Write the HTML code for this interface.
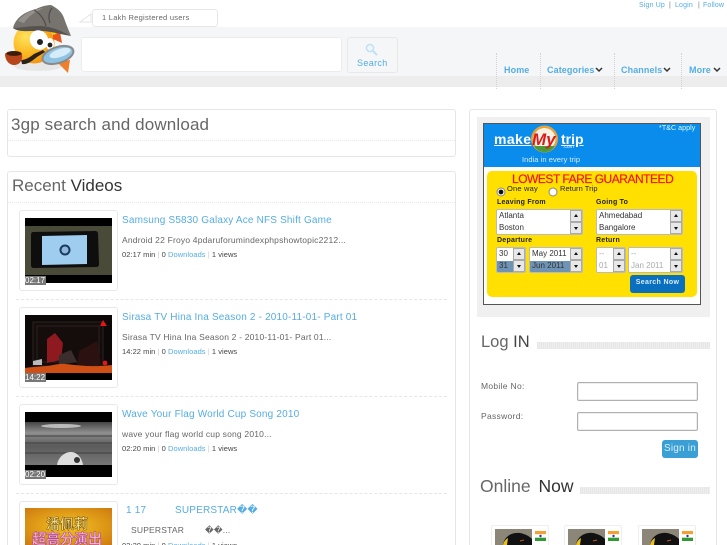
<!DOCTYPE html>
<html><head><meta charset="utf-8">
<style>
html,body{margin:0;padding:0;background:#fff;width:727px;height:545px;overflow:hidden}
#w{width:727px;height:545px;position:relative;overflow:hidden;font-family:"Liberation Sans","Noto Sans CJK SC",sans-serif;color:#555;background:#fff;filter:blur(.3px)}
.a{position:absolute;white-space:nowrap}
.box{position:absolute;box-sizing:border-box;background:#fff;border:1px solid #e6e6e6;border-radius:3px}
.sep{position:absolute;top:53px;height:36px;border-left:1px dotted #d2d2d2}
.nav{position:absolute;top:65px;font-size:9px;font-weight:bold;color:#55ade3;letter-spacing:.1px;white-space:nowrap}
.chev{position:absolute;top:67px}
.tl{position:absolute;top:2px;font-size:7px;color:#55ade3;letter-spacing:.15px;white-space:nowrap}
.dash{position:absolute;left:16px;width:431px;border-top:1px dashed #e6e6e6}
.card{position:absolute;left:19px;width:99px;height:81px;box-sizing:border-box;background:#fff;border:1px solid #e8e8e8;border-radius:3px}
.th{position:absolute;left:25px;width:87px;height:65px;overflow:hidden;background:#000}
.tm{position:absolute;left:25px;width:21px;height:9px;background:#777;color:#fff;font-size:8px;line-height:9px;overflow:hidden;white-space:nowrap}
.t{position:absolute;left:122px;font-size:10px;color:#55ade3;letter-spacing:.18px;white-space:nowrap}
.d{position:absolute;left:122px;font-size:8.5px;color:#666;letter-spacing:.19px;white-space:nowrap}
.m{position:absolute;left:122px;font-size:7.5px;color:#444;letter-spacing:.05px;white-space:nowrap}
.m b{font-weight:normal;color:#55ade3}.m i{font-style:normal;color:#ccc}
.lb{position:absolute;font-size:7.5px;color:#222;letter-spacing:.2px;white-space:nowrap}
.lbb{position:absolute;font-size:7px;font-weight:bold;color:#222;letter-spacing:.25px;white-space:nowrap}
.sel{position:absolute;box-sizing:border-box;background:#fff;border:1px solid #bbb;border-radius:2px;overflow:hidden;font-size:8px;color:#333}
.sel span{position:absolute;left:2px;white-space:nowrap}
.sb{position:absolute;right:0;width:12px;height:12px;background:#e8e8e8;border:1px solid #aaa;box-sizing:border-box}
.sb:after{content:"";position:absolute;left:2.5px;border-left:2.5px solid transparent;border-right:2.5px solid transparent}
.up:after{top:3px;border-bottom:3px solid #111}
.dn:after{top:4px;border-top:3px solid #111}
.hatch{position:absolute;height:7px;background:repeating-linear-gradient(90deg,#e6e6e6 0 1px,#eeeeee 1px 2px)}
.u{position:absolute;top:525px;width:58px;height:20px;box-sizing:border-box;background:#fff;border:1px solid #eee;border-bottom:0;border-radius:2px 2px 0 0}
.inp{position:absolute;left:577px;width:121px;height:19px;box-sizing:border-box;border:1px solid #b0b0b0;border-radius:2px;background:#fff;box-shadow:inset 0 0 0 .5px #ddd}
</style></head><body><div id="w">

<!-- header bands -->
<div class="a" style="left:0;top:27px;width:727px;height:49px;background:#f5f6f8"></div>
<div class="a" style="left:0;top:76px;width:727px;height:11px;background:#ededed"></div>

<!-- mascot -->
<svg class="a" style="left:3px;top:3px" width="76" height="73" viewBox="3 3 76 73">
<defs><radialGradient id="fc" cx=".3" cy=".35" r=".8"><stop offset="0" stop-color="#ffe35c"/><stop offset=".55" stop-color="#fbb51f"/><stop offset="1" stop-color="#ee8a12"/></radialGradient></defs>
<ellipse cx="38" cy="66" rx="24" ry="5" fill="#ddd" opacity=".6"/>
<circle cx="34" cy="43" r="20.500" fill="url(#fc)"/>
<path d="M53 30l7 2 2 11-9-4z" fill="#e8551a"/>
<path d="M50 31l6-3 3 4-5 3z" fill="#ffc800"/>
<path d="M13 28C16 16 28 11 36 9c6-3 12-4 15-4 6 3 11 7 13 13 2 6 5 13 7 18-10-5-22-11-36-10-8 1-16 3-22 2z" fill="#77736f"/>
<path d="M18 21C24 13 34 9 44 8c-10 4-16 9-20 15z" fill="#94908c"/>
<path d="M34 10c5 3 10 8 12 16M52 8c-3 4-4 9-2 15" stroke="#4f4c49" stroke-width="1.200" fill="none"/>
<path d="M13 28c7 0 15-2 23-2 13-1 26 5 35 10-12-2-24-6-36-5-8 0-17 1-22-3z" fill="#55524f"/>
<ellipse cx="39" cy="40" rx="9" ry="10" fill="#fff" transform="rotate(-30 39 40)"/>
<ellipse cx="50" cy="44" rx="4" ry="6" fill="#fff"/>
<circle cx="40" cy="42" r="3" fill="#222"/>
<circle cx="50" cy="45" r="2.400" fill="#222"/>
<path d="M21 60c5 0 9-3 13-6l9-4 2 2-8 5c-5 4-10 8-15 7z" fill="#2d2218"/>
<path d="M5 54c3-4 15-4 17 0 1 6-2 11-8 11-5 0-9-5-9-11z" fill="#b8451a"/>
<ellipse cx="14" cy="53.500" rx="7.500" ry="2.400" fill="#3b1d0c"/>
<path d="M57 62l13-2-2 13z" fill="#ef7f2a"/>
<ellipse cx="58" cy="55" rx="16" ry="8" transform="rotate(-18 58 55)" fill="#8fc3e4" stroke="#8a8a8a" stroke-width="2"/>
<ellipse cx="60" cy="53" rx="11" ry="4" transform="rotate(-18 60 53)" fill="#d6ecf8"/>
</svg>

<!-- speech -->
<svg class="a" style="left:79px;top:12px" width="15" height="12"><path d="M1 10l11-8v8z" fill="#fff" stroke="#e4e4e4"/></svg>
<div class="box" style="left:92px;top:9px;width:126px;height:18px"></div>
<div class="a" style="left:102px;top:13px;font-size:7.5px;color:#666;letter-spacing:.27px">1 Lakh Registered users</div>

<!-- top links -->
<div class="tl" style="left:639px">Sign Up</div><div class="tl" style="left:669px;color:#777">|</div><div class="tl" style="left:675px">Login</div><div class="tl" style="left:698px;color:#777">|</div><div class="tl" style="left:703px">Follow</div>

<!-- search -->
<div class="box" style="left:81px;top:37px;width:261px;height:35px;border-color:#ececec"></div>
<div class="box" style="left:347px;top:37px;width:51px;height:36px;background:#f5f6f8;border-color:#e8e8e8"></div>
<svg class="a" style="left:365px;top:43px" width="13" height="13"><circle cx="5" cy="5" r="3.600" fill="#eef6fb" stroke="#c0dff2" stroke-width="1.400"/><path d="M8 8l4 4" stroke="#c0dff2" stroke-width="2"/></svg>
<div class="a" style="left:357px;top:58px;font-size:9px;color:#55ade3;letter-spacing:.35px">Search</div>

<!-- nav -->
<div class="sep" style="left:496px"></div><div class="sep" style="left:540px"></div><div class="sep" style="left:614px"></div><div class="sep" style="left:681px"></div>
<div class="nav" style="left:504px">Home</div>
<div class="nav" style="left:547px">Categories</div>
<div class="nav" style="left:621px">Channels</div>
<div class="nav" style="left:689px">More</div>
<svg class="chev" style="left:595px" width="8" height="6"><path d="M1 1l3 3 3-3" stroke="#333" stroke-width="1.500" fill="none"/></svg>
<svg class="chev" style="left:663px" width="8" height="6"><path d="M1 1l3 3 3-3" stroke="#333" stroke-width="1.500" fill="none"/></svg>
<svg class="chev" style="left:713px" width="8" height="6"><path d="M1 1l3 3 3-3" stroke="#333" stroke-width="1.500" fill="none"/></svg>

<!-- panel 1 -->
<div class="box" style="left:7px;top:109px;width:449px;height:48px"></div>
<div class="a" style="left:11px;top:115px;font-size:17px;letter-spacing:.15px;color:#666">3gp search and download</div>
<div class="a" style="left:8px;top:140px;width:447px;border-top:1px dotted #e8e8e8"></div>

<!-- panel 2 -->
<div class="box" style="left:7px;top:171px;width:449px;height:374px;border-bottom:0;border-radius:3px 3px 0 0"></div>
<div class="a" style="left:12px;top:176px;font-size:17px;color:#666">Recent <span style="color:#333">Videos</span></div>
<div class="a" style="left:8px;top:202px;width:447px;border-top:1px dotted #e8e8e8"></div>

<!-- item 1 -->
<div class="card" style="top:210px"></div>
<div class="th" style="top:218px"><svg width="87" height="65"><rect width="87" height="65" fill="#000"/><rect y="8" width="87" height="49" fill="#4a4a38"/><path d="M8 14l62-1c2 0 3 1 3 3l1 30c0 2-1 3-3 3l-62 1c-2 0-3-1-3-3V17c0-2 1-3 2-3z" fill="#0e0e0e"/><path d="M17 18l45-1 0 29-45 1z" fill="#9ecdf0"/><circle cx="40" cy="32" r="5.500" fill="#1a3a60"/><circle cx="40" cy="32" r="3.500" fill="#8fb8dc"/></svg></div>
<div class="tm" style="top:276px">02:17</div>
<div class="t" style="top:215px">Samsung S5830 Galaxy Ace NFS Shift Game</div>
<div class="d" style="top:235px">Android 22 Froyo 4pdaruforumindexphpshowtopic2212...</div>
<div class="m" style="top:250px">02:17 min <i>|</i> 0 <b>Downloads</b> <i>|</i> 1 views</div>
<div class="dash" style="top:299px"></div>

<!-- item 2 -->
<div class="card" style="top:307px"></div>
<div class="th" style="top:315px"><svg width="87" height="65"><rect width="87" height="65" fill="#0c0808"/><rect x="8" y="7" width="70" height="44" fill="#150c0c" stroke="#2a2222"/><rect x="12" y="11" width="62" height="36" fill="none" stroke="#2a2222"/><path d="M22 24l8-6 8 10-2 17-14 3z" fill="#8e1a20"/><path d="M34 40l12-5 6 12-18 3z" fill="#3a2e2c"/><path d="M54 36l18-10 4 24-24 2z" fill="#2b1210"/><path d="M0 53c14-2 18-1 28-3s12-1 22 0 20 2 37 0v8H0z" fill="#cf4f14"/><path d="M8 46l9-2v6H8z" fill="#bbb"/><path d="M78 5l4 6h-7z" fill="#e01818"/><circle cx="80" cy="48" r="2.400" fill="#e01818"/><rect y="58" width="87" height="7" fill="#000"/></svg></div>
<div class="tm" style="top:373px">14:22</div>
<div class="t" style="top:312px">Sirasa TV Hina Ina Season 2 - 2010-11-01- Part 01</div>
<div class="d" style="top:332px">Sirasa TV Hina Ina Season 2 - 2010-11-01- Part 01...</div>
<div class="m" style="top:347px">14:22 min <i>|</i> 0 <b>Downloads</b> <i>|</i> 1 views</div>
<div class="dash" style="top:396px"></div>

<!-- item 3 -->
<div class="card" style="top:404px"></div>
<div class="th" style="top:412px"><svg width="87" height="65"><defs><linearGradient id="g" x1="0" y1="0" x2="0" y2="1"><stop offset="0" stop-color="#444"/><stop offset=".25" stop-color="#8f8f8f"/><stop offset=".55" stop-color="#5c5c5c"/><stop offset="1" stop-color="#777"/></linearGradient></defs><rect width="87" height="65" fill="#000"/><rect y="10" width="87" height="43" fill="url(#g)"/><ellipse cx="36" cy="14" rx="20" ry="2" fill="#bbb"/><path d="M0 24h87M0 31h87M0 41h87" stroke="#3e3e3e"/><path d="M32 53c1-8 8-13 14-13s11 6 12 13z" fill="#ddd"/><circle cx="52" cy="48" r="3" fill="#333"/></svg></div>
<div class="tm" style="top:470px">02:20</div>
<div class="t" style="top:409px">Wave Your Flag World Cup Song 2010</div>
<div class="d" style="top:429px">wave your flag world cup song 2010...</div>
<div class="m" style="top:444px">02:20 min <i>|</i> 0 <b>Downloads</b> <i>|</i> 1 views</div>
<div class="dash" style="top:493px"></div>

<!-- item 4 -->
<div class="card" style="top:501px;height:44px;border-bottom:0;border-radius:3px 3px 0 0"></div>
<div class="th" style="top:508px;height:37px"><svg width="87" height="37"><defs><radialGradient id="y" cx=".5" cy=".5" r=".7"><stop offset="0" stop-color="#f2c420"/><stop offset="1" stop-color="#cf7a10"/></radialGradient></defs><rect width="87" height="37" fill="url(#y)"/><text x="21" y="21" font-size="14" font-weight="bold" fill="#efe88a" stroke="#7a4a10" stroke-width=".5" font-family="Noto Sans CJK SC,sans-serif">潘佩莉</text><text x="7" y="36" font-size="14" font-weight="bold" fill="#f6b8dc" stroke="#a83a90" stroke-width=".5" font-family="Noto Sans CJK SC,sans-serif">超高分演出</text></svg></div>
<div class="t" style="top:505px;left:126px">1 17</div>
<div class="t" style="top:505px;left:175px">SUPERSTAR��</div>
<div class="d" style="top:525px;left:131px">SUPERSTAR</div>
<div class="d" style="top:525px;left:205px">��...</div>
<div class="m" style="top:541px;height:4px;overflow:hidden;line-height:9px">02:20 min <i>|</i> 0 <b>Downloads</b> <i>|</i> 1 views</div>

<!-- right panel -->
<div class="box" style="left:469px;top:109px;width:248px;height:436px;border-bottom:0;border-radius:3px 3px 0 0"></div>
<div class="a" style="left:477px;top:117px;width:233px;height:200px;background:#f0f0f0"></div>

<!-- ad -->
<div class="a" style="left:483px;top:123px;width:218px;height:182px;box-sizing:border-box;border:1px solid #555;background:#fff"></div>
<div class="a" style="left:484px;top:124px;width:216px;height:43px;background:#0a8ced"></div>
<div class="a" style="left:659px;top:125px;font-size:7px;color:#dff;letter-spacing:.1px">*T&amp;C apply</div>
<div class="a" style="left:494px;top:131px;font-size:14px;font-weight:bold;color:#fff;text-decoration:underline;letter-spacing:.4px">make</div>
<div class="a" style="left:561px;top:131px;font-size:14px;font-weight:bold;color:#fff;text-decoration:underline">trip</div>
<svg class="a" style="left:530px;top:125px" width="30" height="32"><circle cx="14.500" cy="14" r="13.500" fill="#e8a23a"/><circle cx="14.500" cy="14" r="11" fill="#f6f2e6"/><path d="M4 21a12 12 0 0 0 21 0z" fill="#4d9a3a"/><text x="2" y="20" font-size="17" font-weight="bold" font-style="italic" fill="#d91c1c" font-family="Liberation Sans,sans-serif">My</text></svg>
<div class="a" style="left:563px;top:144px;font-size:5px;color:#fff">.com</div>
<div class="a" style="left:522px;top:155px;font-size:7.500px;color:#d5eeff;letter-spacing:.05px">India in every trip</div>

<div class="a" style="left:487px;top:171px;width:210px;height:126px;background:#ffe000;border-radius:5px"></div>
<div class="a" style="left:512px;top:172px;font-size:12px;color:#f01414;-webkit-text-stroke:.2px #f01414;letter-spacing:-.48px">LOWEST FARE GUARANTEED</div>
<svg class="a" style="left:495px;top:186px" width="70" height="12"><circle cx="6" cy="6" r="4" fill="#fff" stroke="#888"/><circle cx="6" cy="6" r="2.400" fill="#111"/><circle cx="58" cy="6" r="4" fill="#fff" stroke="#888"/></svg>
<div class="lb" style="left:507px;top:184px">One way</div>
<div class="lb" style="left:560px;top:184px;letter-spacing:.05px">Return Trip</div>
<div class="lbb" style="left:497px;top:199px">Leaving From</div>
<div class="lbb" style="left:596px;top:199px">Going To</div>

<div class="sel" style="left:496px;top:209px;width:87px;height:26px"><span style="top:1px">Atlanta</span><span style="top:13px">Boston</span><div class="sb up" style="top:0"></div><div class="sb dn" style="top:12px"></div></div>
<div class="sel" style="left:596px;top:209px;width:87px;height:26px"><span style="top:1px">Ahmedabad</span><span style="top:13px">Bangalore</span><div class="sb up" style="top:0"></div><div class="sb dn" style="top:12px"></div></div>

<div class="lbb" style="left:497px;top:237px">Departure</div>
<div class="lbb" style="left:596px;top:237px">Return</div>

<div class="sel" style="left:496px;top:247px;width:30px;height:26px"><div style="position:absolute;left:0;top:13px;width:100%;height:13px;background:#6f93b5"></div><span style="top:1px">30</span><span style="top:13px">31</span><div class="sb up" style="top:0"></div><div class="sb dn" style="top:12px"></div></div>
<div class="sel" style="left:529px;top:247px;width:54px;height:26px"><div style="position:absolute;left:0;top:13px;width:100%;height:13px;background:#6f93b5"></div><span style="top:1px">May 2011</span><span style="top:13px">Jun 2011</span><div class="sb up" style="top:0"></div><div class="sb dn" style="top:12px"></div></div>
<div class="sel" style="left:596px;top:247px;width:30px;height:26px;color:#aaa"><span style="top:1px">--</span><span style="top:13px">01</span><div class="sb up" style="top:0"></div><div class="sb dn" style="top:12px"></div></div>
<div class="sel" style="left:628px;top:247px;width:55px;height:26px;color:#aaa"><span style="top:1px">--</span><span style="top:13px">Jan 2011</span><div class="sb up" style="top:0"></div><div class="sb dn" style="top:12px"></div></div>

<div class="a" style="left:630px;top:275px;width:55px;height:18px;background:#0b6fc0;border-radius:3px;color:#d8ecfa;font-size:7px;font-weight:bold;text-align:center;line-height:16px;letter-spacing:.35px">Search Now</div>

<!-- login -->
<div class="a" style="left:481px;top:333px;font-size:16.500px;color:#666">Log <span style="color:#444">IN</span></div>
<div class="hatch" style="left:537px;top:342px;width:173px"></div>
<div class="a" style="left:481px;top:381px;font-size:8.500px;color:#666;letter-spacing:.3px">Mobile No:</div>
<div class="a" style="left:481px;top:411px;font-size:8.500px;color:#666;letter-spacing:.3px">Password:</div>
<div class="inp" style="top:382px"></div>
<div class="inp" style="top:412px"></div>
<div class="a" style="left:662px;top:440px;width:36px;height:18px;background:#3a9fd5;border-radius:3px;color:#d8effa;font-size:10px;text-align:center;line-height:17px;letter-spacing:.2px">Sign in</div>

<!-- online -->
<div class="a" style="left:480px;top:476px;font-size:17.500px;color:#666">Online <span style="color:#333;margin-left:3px">Now</span></div>
<div class="hatch" style="left:580px;top:487px;width:130px"></div>

<div class="u" style="left:491px"></div>
<div class="u" style="left:564px"></div>
<div class="u" style="left:638px"></div>
<svg class="a" style="left:495px;top:529px" width="37" height="16"><rect width="37" height="16" fill="#8b8678"/><path d="M8 16C9 8 16 3 25 4c5 1 9 3 12 6v6z" fill="#111"/><path d="M8 16c1-4 3-6 5-7l-1 7z" fill="#e8c020"/><path d="M25 12l4-1" stroke="#c05a1a"/></svg>
<svg class="a" style="left:568px;top:529px" width="37" height="16"><rect width="37" height="16" fill="#8b8678"/><path d="M8 16C9 8 16 3 25 4c5 1 9 3 12 6v6z" fill="#111"/><path d="M8 16c1-4 3-6 5-7l-1 7z" fill="#e8c020"/><path d="M25 12l4-1" stroke="#c05a1a"/></svg>
<svg class="a" style="left:642px;top:529px" width="37" height="16"><rect width="37" height="16" fill="#8b8678"/><path d="M8 16C9 8 16 3 25 4c5 1 9 3 12 6v6z" fill="#111"/><path d="M8 16c1-4 3-6 5-7l-1 7z" fill="#e8c020"/><path d="M25 12l4-1" stroke="#c05a1a"/></svg>
<svg class="a" style="left:535px;top:531px" width="11" height="10"><rect width="11" height="3.300" fill="#f5a030"/><rect y="3.300" width="11" height="3.400" fill="#fff"/><rect y="6.700" width="11" height="3.300" fill="#2f9a2f"/><circle cx="5.500" cy="5" r="1.200" fill="#33a"/></svg>
<svg class="a" style="left:608px;top:531px" width="11" height="10"><rect width="11" height="3.300" fill="#f5a030"/><rect y="3.300" width="11" height="3.400" fill="#fff"/><rect y="6.700" width="11" height="3.300" fill="#2f9a2f"/><circle cx="5.500" cy="5" r="1.200" fill="#33a"/></svg>
<svg class="a" style="left:682px;top:531px" width="11" height="10"><rect width="11" height="3.300" fill="#f5a030"/><rect y="3.300" width="11" height="3.400" fill="#fff"/><rect y="6.700" width="11" height="3.300" fill="#2f9a2f"/><circle cx="5.500" cy="5" r="1.200" fill="#33a"/></svg>

</div></body></html>
